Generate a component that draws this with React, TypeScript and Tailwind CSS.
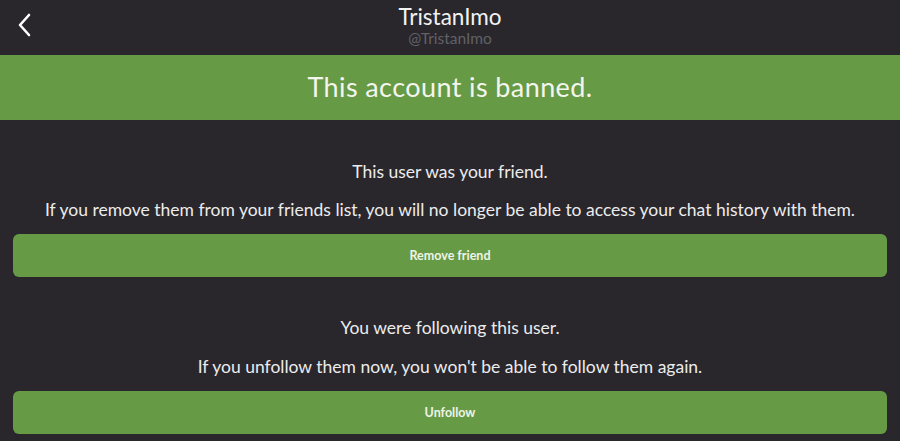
export default function App() {
  return (
    <div className="w-[900px] h-[441px] overflow-hidden bg-[#29272c] text-[#ececec] font-['Lato','Noto_Sans',sans-serif]">
      {/* header */}
      <header className="relative h-[55px] flex flex-col items-center">
        <button className="absolute left-[16px] top-[12px] text-white">
          <svg width="18" height="26" viewBox="0 0 18 26" fill="none">
            <path d="M13 3 L4 13 L13 23" stroke="currentColor" strokeWidth="2.6" strokeLinecap="round" strokeLinejoin="round" />
          </svg>
        </button>
        <h1 className="mt-[4px] text-[22.5px] leading-[25px] text-[#f2f2f2]">TristanImo</h1>
        <p className="text-[15.5px] leading-[18px] text-[#626165]">@TristanImo</p>
      </header>

      {/* banned banner */}
      <div className="h-[65px] bg-[#679a45] flex items-center justify-center">
        <h2 className="text-[27px] tracking-[0.4px] text-[#f3f5ee]">This account is banned.</h2>
      </div>

      <main className="px-[13px] flex flex-col text-[17.5px] leading-[20px]">
        <p className="mt-[42px] text-center">This user was your friend.</p>
        <p className="mt-[18px] text-center whitespace-nowrap">
          If you remove them from your friends list, you will no longer be able to access your chat history with them.
        </p>
        <button className="mt-[14px] h-[43px] rounded-[6px] bg-[#679a45] text-[12.5px] font-bold text-[#eef3e8]">
          Remove friend
        </button>

        <p className="mt-[41px] text-center">You were following this user.</p>
        <p className="mt-[19px] text-center">
          If you unfollow them now, you won't be able to follow them again.
        </p>
        <button className="mt-[14px] h-[43px] rounded-[6px] bg-[#679a45] text-[12.5px] font-bold text-[#eef3e8]">
          Unfollow
        </button>
      </main>
    </div>
  )
}
